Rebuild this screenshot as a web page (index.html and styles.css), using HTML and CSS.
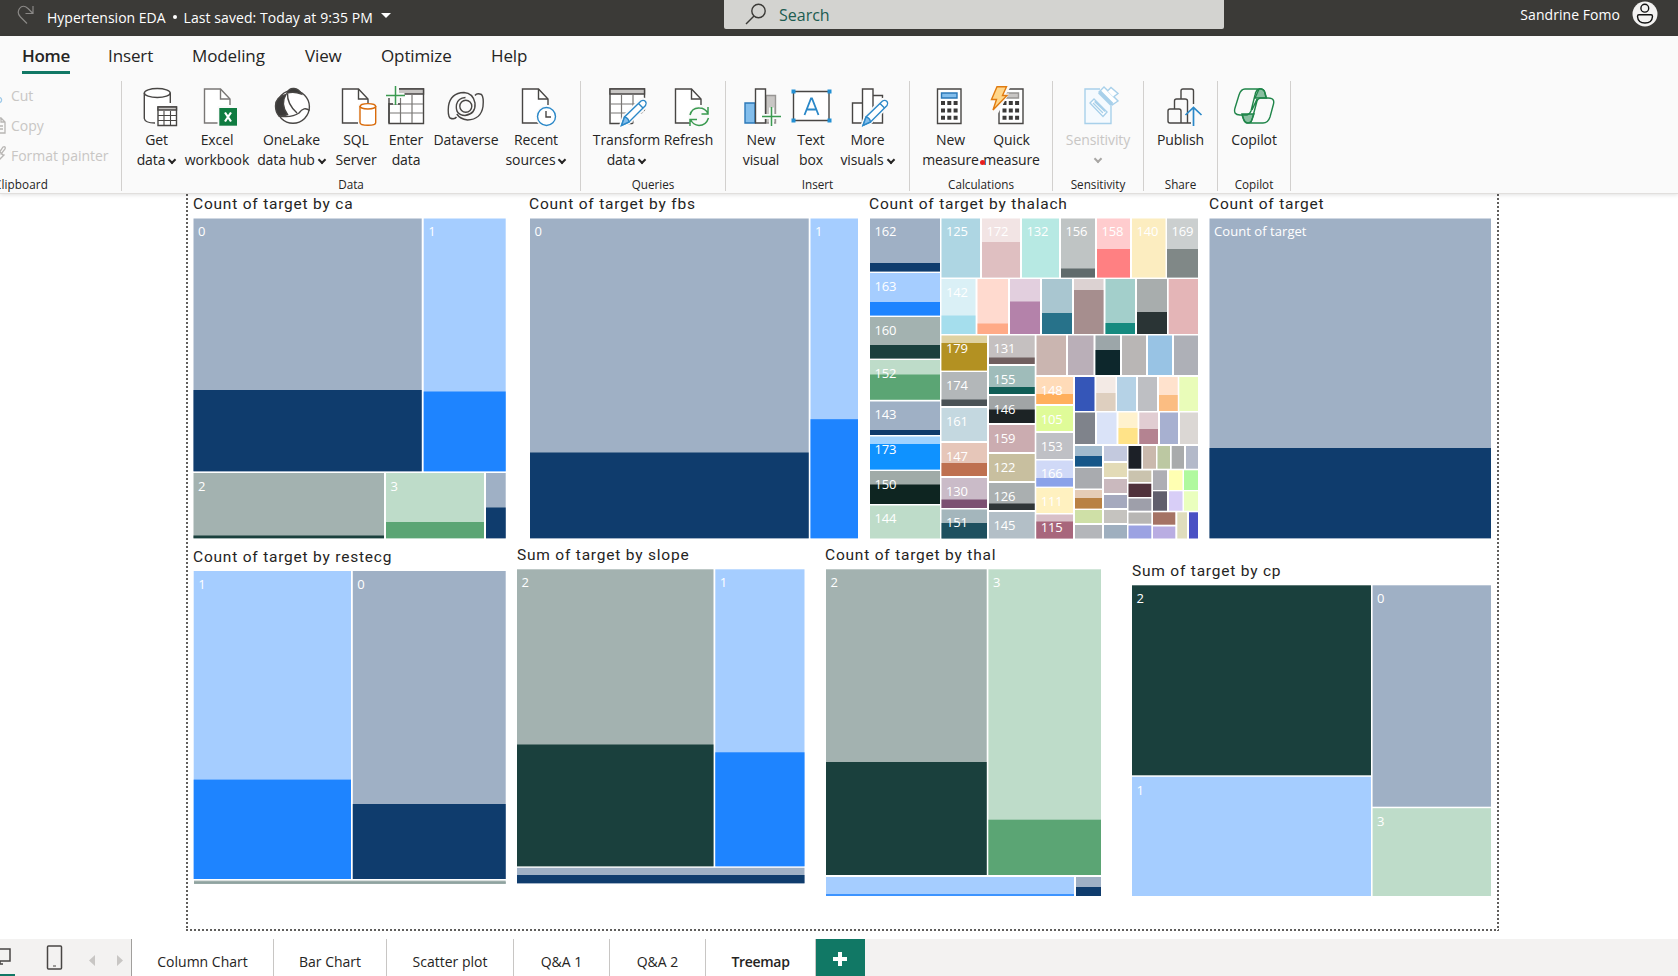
FILE: index.html
```html
<!DOCTYPE html>
<html lang="en">
<head>
<meta charset="utf-8">
<title>Hypertension EDA</title>
<link rel="stylesheet" href="styles.css">
</head>
<body>
<svg class="defs" width="0" height="0">
  <defs>
    <g id="page"><path d="M7.5 3H23.5L33 12.500V36.500H7.500Z" fill="#fff" stroke="none"/><path d="M33 19V13L23.500 3H7.500V37H26" fill="none"/><path d="M23.500 3V13H33" fill="none"/></g>
    <g id="pencil"><path d="M14 40L17 31L34 14Q37 12.500 39 15Q41 17.500 39 20L22 36Z" fill="#fafafa" stroke="#fafafa" stroke-width="4"/><path d="M14.500 39.500L17.500 31L34 15Q36.500 13.500 38.500 15.500Q40 17.500 38.500 19.500L22 36Z" fill="#fff" stroke="#2b88c8"/><path d="M14.500 39.500L17.500 31Q21.500 32 22 36Z" fill="#83beec" stroke="#2b88c8"/><path d="M31.500 17.500L36 22" stroke="#2b88c8"/></g>
    <g id="plus"><path d="M-9 0H9M0 -9V9" stroke="#fafafa" stroke-width="5"/><path d="M-9.500 0H9.500M0 -9.500V9.500" stroke="#3a9a50" stroke-width="1.500"/></g>
    <g id="keys" fill="#3b3a39" stroke="none"><path d="M11 15h4v4h-4zm6.300 0h4v4h-4zm6.300 0h4v4h-4zM11 22.400h4v4h-4zm6.300 0h4v4h-4zm6.300 0h4v4h-4zM11 29.800h4v4h-4zm6.300 0h4v4h-4zm6.300 0h4v4h-4z"/></g>
  </defs>
</svg>
<header class="titlebar">
  <svg class="redo" width="18" height="20" viewBox="0 0 18 20"><path d="M16 1V8.500H8.500M16 8.500L11 3.500Q6 -1 2.500 3.500Q-.5 8 3.500 12L10 18.500" /></svg>
  <span class="doc">Hypertension EDA</span><span class="bullet"></span><span class="doc saved">Last saved: Today at 9:35 PM</span>
  <span class="caret"></span>
  <div class="search">
    <svg width="22" height="22" viewBox="0 0 22 22"><circle cx="13.500" cy="8" r="6.700"/><path d="M9 13L1 21"/></svg>
    <span>Search</span>
  </div>
  <span class="user">Sandrine Fomo</span>
  <svg class="avatar" width="26" height="26" viewBox="0 0 26 26"><circle cx="13" cy="13" r="12.500" fill="#f3f2f1" stroke="none"/><circle cx="12.800" cy="7.200" r="3.900"/><path d="M7 13.800H19Q20.500 13.800 20.500 15.500Q20 22 13 22T5.500 15.500Q5.500 13.800 7 13.800Z"/></svg>
</header>
<section class="ribbon">
  <nav class="menu">
    <a class="active">Home</a><a class="insert">Insert</a><a class="modeling">Modeling</a><a class="view">View</a><a class="optimize">Optimize</a><a class="help">Help</a>
  </nav>
  <div class="groups">
    <div class="group clipboard">
      <ul>
        <li><svg width="10" height="20" viewBox="0 0 10 20"><circle cx="-1" cy="15" r="2.600" stroke="#9cc8e8"/></svg>Cut</li>
        <li><svg width="10" height="20" viewBox="0 0 10 20"><path d="M-2 3H1L5 7V18H-3M1 3V7H5M-1 11H3M-1 14H3"/></svg>Copy</li>
        <li><svg width="10" height="20" viewBox="0 0 10 20"><path d="M-1 8L3 2Q6 1 5 4L1 9L4 10L-2 16M-1 6L3 10"/></svg>Format painter</li>
      </ul>
      <div class="caption">Clipboard</div>
    </div>
    <div class="group data">
      <div class="tools">
        <div class="tool"><svg viewBox="0 0 40 40"><path d="M7.300 7V32Q7.300 37 20 37V20H33.500V7" fill="#fff" stroke="none"/><ellipse cx="20.300" cy="7" rx="13" ry="4.500" fill="#fff"/><path d="M7.300 7V32.500Q8 37 18 37M33.300 7V17"/><path d="M21 21H39.500V39.500H21Z" fill="#fff"/><path d="M21 21H39.500V24H21Z" fill="#c8c6c4"/><path d="M21 29.500H39.500M21 34.500H39.500M27 25V39.500M33.500 25V39.500" stroke-width="1.100"/></svg><span>Get<br>data<i class="chev"></i></span></div>
        <div class="tool"><svg viewBox="0 0 40 40"><g stroke="#797775"><use href="#page"/></g><path d="M20.500 20H40V40H20.500Z" fill="#fafafa" stroke="none"/><path d="M22.300 22H40V39.700H22.300Z" fill="#107c41" stroke="none"/><path d="M28 26.500L34 35.500M34 26.500L28 35.500" stroke="#fff" stroke-width="2.200"/></svg><span>Excel<br>workbook</span></div>
        <div class="tool"><svg viewBox="0 0 40 40"><circle cx="21" cy="20.800" r="16.400" fill="#fff"/><path d="M14 8.500Q3.500 11 3.500 20Q3.500 26 7 30Q12 30 15.500 28.500Q8 18 14 8.500Z" fill="#3b3a39"/><path d="M15 7Q17 2 22 2.500Q27 3 29.500 8Q22 5 15 7Z" fill="#3b3a39"/><path d="M15.500 7.500Q15 18 25 27M7 30Q20 32 27 27Q32 20 37.500 24.500" fill="none"/></svg><span>OneLake<br>data hub<i class="chev"></i></span></div>
        <div class="tool"><svg viewBox="0 0 40 40"><use href="#page" x="-1"/><path d="M22 18H40V40H22Z" fill="#fafafa" stroke="none"/><path d="M24 20V36.500Q24 39.300 32 39.300T39.700 36.500V20" fill="#fff" stroke="#d96b0b"/><ellipse cx="31.900" cy="20.300" rx="7.800" ry="2.700" fill="#fff" stroke="#d96b0b"/></svg><span>SQL<br>Server</span></div>
        <div class="tool"><svg viewBox="0 0 40 40"><path d="M3 3H37.500V37.500H3Z" fill="#fff"/><path d="M3 3H37.500V8H3Z" fill="#c8c6c4"/><path d="M3 18H37M3 27H37M14.500 8V37M26 8V37" stroke-width="1.200" stroke="#797775"/><path d="M-1 0H13V17H-1Z" fill="#fafafa" stroke="none"/><path d="M3 12V37M3 18H14.500" /><use href="#plus" x="9.500" y="9.500"/></svg><span>Enter<br>data</span></div>
        <div class="tool"><svg viewBox="0 0 40 40"><circle cx="19.800" cy="20.300" r="6"/><path d="M10.500 31Q8.500 34 4 32Q1.500 29 2.500 20Q4.500 7 18 6.500Q27 7 29 17Q30 28 19 29.500Q9 29 10.500 18.500Q12 12 19.500 11.500"/><path d="M29 9.500Q31 6.500 35.500 8.500Q38 11.500 37 20.500Q35 33.500 21.500 34Q14 33 10.800 28"/></svg><span>Dataverse</span></div>
        <div class="tool"><svg viewBox="0 0 40 40"><use href="#page" x="-1"/><circle cx="30.500" cy="30.500" r="11" fill="#fafafa" stroke="none"/><circle cx="30.500" cy="30.500" r="9" fill="#fff" stroke="#2b88c8"/><path d="M30 25V31H35"/></svg><span>Recent<br>sources<i class="chev"></i></span></div>
      </div>
      <div class="caption">Data</div>
    </div>
    <div class="group queries">
      <div class="tools">
        <div class="tool"><svg viewBox="0 0 40 40"><path d="M3 3H37.500V37.500H3Z" fill="#fff"/><path d="M3 3H37.500V8H3Z" fill="#c8c6c4"/><path d="M3 18H37M3 27H37M14.500 8V37M26 8V37" stroke-width="1.200" stroke="#797775"/><path d="M24 40L40 22V40Z" fill="#fafafa" stroke="none"/><use href="#pencil"/></svg><span>Transform<br>data<i class="chev"></i></span></div>
        <div class="tool"><svg viewBox="0 0 40 40"><use href="#page" x="-1"/><circle cx="30" cy="31" r="11" fill="#fafafa" stroke="none"/><g fill="none" stroke="#3a9a50" stroke-width="1.500"><path d="M21 29Q23 21.500 30.500 22Q36 22 39 27.500M39 21V28H32.500M39.500 32Q37 39.500 30 39.500Q24 39 21.500 33.500M21 40V33.500H28"/></g></svg><span>Refresh</span></div>
      </div>
      <div class="caption">Queries</div>
    </div>
    <div class="group visuals">
      <div class="tools">
        <div class="tool"><svg viewBox="0 0 40 40"><path d="M25 9.500H34.500V37H25Z" fill="#c8c6c4" stroke="#979593"/><path d="M4 17H14V37H4Z" fill="#83beec" stroke="#2b78b8"/><path d="M14.500 3H24.500V37H14.500Z" fill="#fff"/><use href="#plus" x="30.500" y="30.500"/></svg><span>New<br>visual</span></div>
        <div class="tool"><svg viewBox="0 0 40 40"><path d="M2.500 5.500H38V34.500H2.500Z" fill="#fff"/><path d="M13.500 29L20 12.500H21L27.500 29M15.700 23.500H25.300" stroke="#2b88c8" stroke-width="1.800"/><path d="M.5 3.500h4v4h-4zm36 0h4v4h-4zm0 29h4v4h-4zm-36 0h4v4h-4z" fill="#2390d4" stroke="none"/></svg><span>Text<br>box</span></div>
        <div class="tool"><svg viewBox="0 0 40 40"><path d="M25 9.500H34.500V37H25ZM4.500 17H14.500V37H4.500ZM14.500 3H25V37H14.500Z" fill="#fff"/><use href="#pencil" x=".5"/></svg><span>More<br>visuals<i class="chev"></i></span></div>
      </div>
      <div class="caption">Insert</div>
    </div>
    <div class="group calc">
      <div class="tools">
        <div class="tool"><svg viewBox="0 0 40 40"><g transform="translate(-1)"><path d="M7.500 3H31V37.500H7.500Z" fill="#fff"/><path d="M11.500 7H27V12H11.500Z" fill="#83beec" stroke="#2b78b8"/><use href="#keys"/></g></svg><span>New<br>measure</span></div>
        <div class="tool"><svg viewBox="0 0 40 40"><g transform="translate(-.5)"><path d="M7.500 3H31.500V37.500H7.500Z" fill="#fff"/><path d="M15 7H27V12H14Z" fill="#c8c6c4" stroke="#979593"/><use href="#keys"/><path d="M3 0H18L12 9H15L5 27L-2 26Z" fill="#fafafa" stroke="#fafafa" stroke-width="3"/><path d="M5.500 .8H15L11 9.500H15.500L1.500 24L5 13.500H0Z" fill="#ffd68a" stroke="#e07b10"/></g></svg><span>Quick<br>measure</span><b class="dot"></b></div>
      </div>
      <div class="caption">Calculations</div>
    </div>
    <div class="group sens">
      <div class="tools">
        <div class="tool off"><svg viewBox="0 0 40 40" class="pale"><path d="M22 3H7V37.500H33V20" fill="#f5fafe"/><path d="M12 17L16 13L29 26L25 30.500ZM15 17L25 27M16.500 15.500L27 25.500" fill="#fff"/><path d="M21 6L26 1L40 15L34 19Z" fill="#fff" stroke="#a8d0ea"/><path d="M21.500 6L34 18.500" stroke-width="4"/><path d="M29.500 5L33 1.500L40 7.500L35.500 11" fill="#fff"/></svg><span>Sensitivity<br><i class="chev lone"></i></span></div>
      </div>
      <div class="caption">Sensitivity</div>
    </div>
    <div class="group share">
      <div class="tools">
        <div class="tool"><svg viewBox="0 0 40 40"><path d="M7 25Q7 23 9 23H18Q20 23 20 25V37H9Q7 37 7 35ZM13.500 23V15Q13.500 13 15.500 13H24Q26.500 13 26.500 15V37H20M20 13V5Q20 3 22 3H30.500Q32.500 3 32.500 5V18M26 37H30"/><path d="M32.500 40V21.500M24.500 29L32.500 21.500L40.500 29" stroke="#2b88c8" stroke-width="1.700"/></svg><span>Publish</span></div>
      </div>
      <div class="caption">Share</div>
    </div>
    <div class="group copilot">
      <div class="tools">
        <div class="tool"><svg viewBox="0 0 40 40" class="green"><path d="M21 12L25 3Q30 2 31 7L32.500 12ZM8 28L20 28L17 36Q11 39 9.500 33Z" fill="#88bfa0"/><path d="M25 3H11Q7 3 5 9L1 22Q-1 29 6 29H13Q16 28 17 25L21 9Q22 4 25 3ZM25 2.800Q30 2.500 31 7L32 12M15 37H29Q34 37 36 31L39.500 18Q41 12 34 12H26Q23.500 13 23 15L19 30Q18 36 15 37ZM15 37Q11 37 9.500 33L8 29M18 24L23 13" fill="none"/></svg><span>Copilot</span></div>
      </div>
      <div class="caption">Copilot</div>
    </div>
  </div>
</section>
<main class="workspace">
  <div class="report" id="report"></div>
</main>
<footer class="pages">
  <div class="modes">
    <svg width="131" height="37" viewBox="0 0 131 37"><path d="M-4 10H10V22H-4M0 22V25H3M-2 25H3" fill="none" stroke="#484644" stroke-width="1.500"/><path d="M0 35H15V37H0Z" fill="#117865"/><rect x="47.500" y="7" width="14" height="23" rx="1" fill="#f3f2f1" stroke="#484644" stroke-width="1.500"/><path d="M53 27H56" stroke="#484644"/><path d="M95 16V27L89 21.500ZM117 16V27L123 21.500Z" fill="#c8c6c4"/></svg>
  </div>
  <a class="t1">Column Chart</a><a class="t2">Bar Chart</a><a class="t3">Scatter plot</a><a class="t4">Q&amp;A 1</a><a class="t5">Q&amp;A 2</a><a class="t6 current">Treemap</a>
  <button class="add"><svg width="14" height="14" viewBox="0 0 14 14"><path d="M7 0V14M0 7H14"/></svg></button>
</footer>
<script src="treemaps.js"></script>
</body>
</html>
```

FILE: styles.css
```css
* { box-sizing: border-box; }
body {
  margin: 0; width: 1678px; height: 976px; overflow: hidden;
  display: flex; flex-direction: column; background: #fff;
  font-family: "Open Sans", "Noto Sans", sans-serif; font-size: 14px; color: #252423;
}
svg { display: block; flex: none; }
.defs { position: absolute; }

.titlebar { position: relative; height: 36px; flex: none; background: #3b3a37; color: #fff; display: flex; line-height: 35px; padding-left: 17px; }
.redo { margin-top: 5px; fill: none; stroke: #8a8886; stroke-width: 1.2; }
.doc { margin-left: 12px; white-space: nowrap; }
.doc.saved { margin-left: 7px; letter-spacing: .07px; }
.bullet { width: 4px; height: 4px; border-radius: 2px; background: #fff; margin: 15px 0 0 7px; }
.caret { border: 5px solid transparent; border-top-color: #fff; height: 5px; margin: 13px 0 0 8px; }
.search { position: absolute; left: 724px; top: 0; width: 500px; height: 29px; background: #d3d3d0; border-radius: 0 0 2px 2px; display: flex; padding: 3px 0 0 21px; color: #1c5c50; font-size: 16px; line-height: 24px; }
.search svg { fill: none; stroke: #3b3a37; stroke-width: 1.4; margin-right: 12px; }
.user { margin-left: auto; line-height: 30px; letter-spacing: .05px; }
.avatar { margin: 1px 20px 0 12px; fill: none; stroke: #111; stroke-width: 1.4; }

.ribbon { position: relative; z-index: 2; flex: none; height: 158px; background: #fafafa; border-bottom: 1px solid #e1dfdd; box-shadow: 0 1px 4px rgba(0,0,0,.12); }
.menu { display: flex; height: 45px; padding-left: 22px; font-size: 17px; letter-spacing: -.12px; line-height: 39px; }
.menu a { height: 38px; white-space: nowrap; }
.menu .active { width: 48px; font-weight: 600; letter-spacing: -.3px; border-bottom: 3px solid #117865; }
.menu .insert { margin-left: 38px; width: 84px; }
.menu .modeling { width: 113px; }
.menu .view { width: 76px; }
.menu .optimize { width: 110px; }
.groups { display: flex; height: 110px; }
.group { border-right: 1px solid #d2d0ce; display: flex; flex-direction: column; justify-content: space-between; height: 110px; }
.caption { text-align: center; font-size: 11.7px; line-height: 16px; height: 15px; }
.clipboard { width: 122px; }
.clipboard ul { list-style: none; margin: -1px 0 0; padding: 0; color: #c8c6c4; }
.clipboard li { display: flex; align-items: center; height: 30px; gap: 1px; white-space: nowrap; letter-spacing: -.02px; }
.clipboard li svg { fill: none; stroke: #b8b6b4; stroke-width: 1.3; }
.clipboard .caption { text-align: left; margin-left: -6px; letter-spacing: .1px; }
.data { width: 459px; } .queries { width: 145px; } .visuals { width: 184px; } .calc { width: 143px; }
.sens { width: 91px; } .share { width: 74px; } .copilot { width: 73px; }
.tools { display: grid; padding-top: 5px; }
.data .tools { grid-template-columns: 53px 68px 81px 48px 52px 68px 72px; padding-left: 8px; }
.queries .tools { grid-template-columns: 67px 57px; padding-left: 12px; }
.visuals .tools { grid-template-columns: 46px 54px 59px; padding-left: 12px; }
.calc .tools { grid-template-columns: 61px 61px; padding-left: 10px; }
.tool { position: relative; display: flex; flex-direction: column; align-items: center; }
.tool svg { width: 40px; height: 40px; overflow: visible; fill: none; stroke: #484644; stroke-width: 1.4; }
.tool span { margin-top: 4px; line-height: 20px; letter-spacing: -.1px; text-align: center; white-space: nowrap; }
.tool svg.pale { stroke: #a8d0ea; }
.tool svg.green { stroke: #1f8549; }
.off { color: #c8c6c4; }
.chev { display: inline-block; width: 6px; height: 6px; border: solid currentColor; border-width: 0 2px 2px 0; transform: rotate(45deg); margin: 0 1px 2px 4px; }
.chev.lone { margin: 0 0 3px; border-color: #a8a6a4; }
.dot { position: absolute; left: -1px; top: 74px; width: 5px; height: 5px; border-radius: 50%; background: #e81e1e; }

.workspace { flex: 1; position: relative; overflow: hidden; }
.report { position: absolute; left: 0; top: -194px; width: 1678px; height: 976px; }
.report::before {
  content: ""; position: absolute; left: 186px; top: 194px; width: 1313px; height: 737px;
  background:
    repeating-linear-gradient(180deg, #605e5c 0 2px, transparent 2px 4px) left / 2px 100% no-repeat,
    repeating-linear-gradient(180deg, #605e5c 0 2px, transparent 2px 4px) right / 2px 100% no-repeat,
    repeating-linear-gradient(90deg, #605e5c 0 2px, transparent 2px 4px) bottom / 100% 2px no-repeat;
}
.visual { position: absolute; margin: 0; }
.visual figcaption { font: 15.5px/16px Roboto, sans-serif; letter-spacing: .79px; height: 22px; white-space: nowrap; }
.visual text { font-size: 13px; fill: #fff; }

.pages { height: 37px; flex: none; display: flex; background: #f3f2f1; }
.modes { width: 132px; border-right: 1px solid #a19f9d; }
.pages a { background: #fff; border-right: 1px solid #c8c6c4; text-align: center; line-height: 45px; height: 37px; }
.t1 { width: 142px; } .t2 { width: 113px; } .t3 { width: 127px; } .t4, .t5 { width: 96px; } .t6 { width: 110px; }
.pages .current { font-weight: 600; letter-spacing: -.3px; }
.add { width: 49px; border: 0; padding: 3px 1px 0 0; background: #117865; display: flex; justify-content: center; align-items: center; }
.add path { stroke: #fff; stroke-width: 4; }
```

FILE: treemaps.js
```js
// Cell: [left, top, right, bottom, fill, label, highlight fill, highlight top]
const N = '#9fb0c5', ND = '#0f3c6d', B = '#a5cdff', BD = '#1e84ff';
const T = '#a3b2b0', TD = '#1a403d', G = '#bedcc9', GD = '#5ba574';

const visuals = [
  { title: 'Count of target by ca', box: [193, 218, 313, 321], cells: [
    [193.5, 218.5, 421.7, 471.3, N, '0', ND, 390], [423.7, 218.5, 505.7, 471.3, B, '1', BD, 391.5],
    [193.5, 473, 384, 538.3, T, '2', TD, 535.5], [386, 473, 484, 538.3, G, '3', GD, 522],
    [486, 473, 505.7, 538.3, N, '', ND, 507.5]] },
  { title: 'Count of target by fbs', box: [529, 218, 330, 321], cells: [
    [530, 218.5, 808.7, 538.3, N, '0', ND, 452.5], [810.5, 218.5, 858, 538.3, B, '1', BD, 419.2]] },
  { title: 'Count of target by thalach', box: [869, 218, 330, 321], cells: [
    [870, 218.5, 940, 271.5, N, '162', ND, 263], [870, 273, 940, 315.5, B, '163', BD, 302],
    [870, 317, 940, 358.5, T, '160', TD, 345], [870, 360, 940, 399.7, G, '152', GD, 374.5],
    [870, 401.5, 940, 435, N, '143', ND, 430], [870, 436.5, 940, 469.5, '#a0d3ff', '173', '#0f92ff', 444],
    [870, 471, 940, 504, '#a0aba8', '150', '#0e2521', 484.5], [870, 505.5, 940, 538.5, G, '144'],
    [941.5, 218.5, 980, 277.5, '#aed6e3', '125'], [982, 218.5, 1020, 277.5, '#f2e4e4', '172', '#dfbfc1', 242],
    [1022, 218.5, 1059, 277.5, '#b7e9e3', '132'], [1061, 218.5, 1095, 277.5, '#bfc4c4', '156', '#606b6c', 268.5],
    [1097, 218.5, 1130, 277.5, '#ffccce', '158', '#ff8082', 249], [1132, 218.5, 1165.5, 277.5, '#fcedc0', '140'],
    [1167, 218.5, 1198, 277.5, '#cbcfcf', '169', '#808887', 249],
    [941.5, 279, 975.5, 334, '#daf0f6', '142', '#a5deed', 315.5], [977.5, 279, 1008, 334, '#ffdacf', '', '#ffaa87', 323.5],
    [1010, 279, 1040, 334, '#e2cfde', '', '#b482aa', 301.5], [1042, 279, 1072, 334, '#a9c6d0', '', '#27728a', 313],
    [1074, 279, 1103.5, 334, '#dcd2d2', '', '#a68e8e', 290], [1105.5, 279, 1135, 334, '#a3cfcb', '', '#168a7f', 323],
    [1137, 279, 1167, 334, '#a8adad', '', '#2a3435', 312], [1168.7, 279, 1198, 334, '#e4b5b7'],
    [941.5, 335.5, 987, 370.5, '#dfd2a2', '179', '#b39122', 343], [941.5, 372, 987, 406, '#b3b7b9', '174', '#4a5256', 399.5],
    [941.5, 408, 987, 441, '#c4d8e0', '161'], [941.5, 443, 987, 476, '#e6c6b9', '147', '#be7050', 463],
    [941.5, 478, 987, 508, '#cabbc8', '130', '#7c5072', 499.5], [941.5, 509.5, 987, 538.5, '#a4b6bc', '151', '#1e505f', 523],
    [989, 335.5, 1034.7, 364, '#c5c0c0', '131', '#705f5f', 357.5], [989, 366, 1034.7, 394, '#9fbcba', '155', '#105e57', 387],
    [989, 396, 1034.7, 423, '#a1a5a6', '146', '#1c2325', 409.5], [989, 425, 1034.7, 452, '#cbacb0', '159'],
    [989, 454, 1034.7, 481, '#c8bf9f', '122'], [989, 483, 1034.7, 510, '#aaafb0', '126', '#303638', 503.5],
    [989, 512, 1034.7, 538.5, '#b3bfc7', '145'],
    [1036.5, 335.5, 1066, 375, '#cab5b0'], [1068, 335.5, 1093.5, 375, '#baafb8'],
    [1095.5, 335.5, 1120, 375, '#9ca6a9', '', '#0d272c', 350], [1122, 335.5, 1146, 375, '#b9b6b5'],
    [1148, 335.5, 1172, 375, '#98c3e4'], [1174, 335.5, 1198, 375, '#aeb0b7'],
    [1036.3, 377, 1073, 404, '#ffdbb8', '148', '#ffaf5c', 394], [1036.3, 406, 1073, 431, '#dffb98', '105'],
    [1036.3, 433, 1073, 459, '#bfc0c5', '153'], [1036.3, 460.5, 1073, 486.5, '#d0d9f7', '166', '#8ba2e9', 478],
    [1036.3, 488, 1073, 513, '#fff1c0', '111'], [1036.3, 514.5, 1073, 538.5, '#d8c0c8', '115', '#a8667c', 521.5],
    [1075, 377, 1094.5, 411, '#3556b8'], [1096.3, 377, 1115.5, 411, '#f3eae5', '', '#decfbf', 393],
    [1117, 377, 1136, 411, '#b5d2e6'], [1138, 377, 1157, 411, '#bebfc3'],
    [1159, 377, 1177.7, 411, '#ffe2cd', '', '#fbbd82', 395], [1179.3, 377, 1198, 411, '#e9fcb9'],
    [1075, 412.5, 1095, 444, '#7f838b'], [1097, 412.5, 1116.5, 444, '#dae3f8'],
    [1118.5, 412.5, 1137.5, 444, '#fff2ce', '', '#ffe388', 428], [1139.3, 412.5, 1158, 444, '#e1cdd2', '', '#b48391', 429],
    [1160, 412.5, 1178, 444, '#a7b0d0'], [1180, 412.5, 1198, 444, '#dbd7d4'],
    [1075, 446, 1102, 466.5, '#a1bacd', '', '#165688', 456], [1075, 468, 1102, 488.5, '#a9abaf'],
    [1075, 490, 1102, 508.5, '#e5ccb7', '', '#b98144', 498], [1075, 510, 1102, 523, '#cfe0a7'],
    [1075, 525, 1102, 538.5, '#b4b6ba'],
    [1104, 446, 1127, 461, '#c3c9de'], [1104, 463, 1127, 477, '#e3dbb7'], [1104, 479, 1127, 493, '#cab9be'],
    [1104, 495, 1127, 508, '#a5a9be'], [1104, 510, 1127, 523, '#c5c3bf'], [1104, 525, 1127, 538.5, '#9fafbf'],
    [1128.5, 446, 1141.3, 468.7, '#1c2027'], [1143, 446, 1156, 468.7, '#cab9ad'], [1157.5, 446, 1170, 468.7, '#bcc8a2'],
    [1171.7, 446, 1184, 468.7, '#a9abac'], [1186, 446, 1198, 468.7, '#b3b9c9'],
    [1128.5, 470.5, 1151.3, 482, '#cac3ae'], [1128.5, 483.7, 1151.3, 497, '#50323c'], [1128.5, 498.5, 1151.3, 510.7, '#9e9faa'],
    [1128.5, 512.5, 1151.3, 523.7, '#b8b6b4'], [1128.5, 525.5, 1151.3, 538.5, '#9ba2e2'],
    [1153, 470.3, 1167, 490, '#aeaeb4'], [1153, 491.3, 1167, 510.7, '#615f6d'],
    [1169, 470.3, 1182.5, 490, '#ffffb2'], [1169, 491.3, 1182.5, 510.7, '#d8cef7'],
    [1184, 470.3, 1198, 490, '#b0f99e'], [1184, 491.3, 1198, 510.7, '#eaffbe'],
    [1153, 512.3, 1175.3, 524.7, '#a57365'], [1153, 526.5, 1175.3, 538.5, '#b9ade2'],
    [1177.3, 512.3, 1187, 538.5, '#dfddbd'], [1189, 512.3, 1198, 538.5, '#4a51c4']] },
  { title: 'Count of target', box: [1209, 218, 283, 321], cells: [
    [1209.5, 218.5, 1491, 538.3, N, 'Count of target', ND, 448]] },
  { title: 'Count of target by restecg', box: [193, 571, 313, 314], cells: [
    [193.7, 571, 351, 879, B, '1', BD, 779.6], [352.8, 571, 505.7, 879, N, '0', ND, 804],
    [194, 880.6, 505.7, 883.8, T, '', '#8fa3a0', 881.8]] },
  { title: 'Sum of target by slope', box: [517, 569, 288, 315], cells: [
    [517, 569.3, 713.5, 866.3, T, '2', TD, 744.5], [715.3, 569.3, 804.5, 866.3, B, '1', BD, 752.3],
    [517, 867.8, 804.5, 883.3, N, '', ND, 875]] },
  { title: 'Count of target by thal', box: [825, 569, 277, 328], cells: [
    [826, 569.3, 986.7, 875, T, '2', TD, 762], [988.4, 569.3, 1101, 875, G, '3', GD, 819.7],
    [826, 877, 1074, 896, B, '', '#3d94ff', 894], [1076, 877, 1101, 896, N, '', ND, 887]] },
  { title: 'Sum of target by cp', box: [1132, 585, 360, 312], cells: [
    [1132, 585.3, 1371, 775.3, TD, '2'], [1132, 776.8, 1371, 896, B, '1'],
    [1372.6, 585.3, 1491, 806.7, N, '0'], [1372.6, 808.2, 1491, 896, G, '3']] },
];

const report = document.getElementById('report');
for (const { title, box: [x, y, w, h], cells } of visuals) {
  let shapes = '';
  for (const [l, t, r, b, fill, label, hot, split] of cells) {
    shapes += `<rect x="${l}" y="${t}" width="${r - l}" height="${b - t}" fill="${fill}"/>`;
    if (hot) shapes += `<rect x="${l}" y="${split}" width="${r - l}" height="${b - split}" fill="${hot}"/>`;
    if (label) {
      const len = label.length > 3 ? 92.5 : label.length * 7.3;
      shapes += `<text x="${l + 4.5}" y="${t + 17.7}" textLength="${len}">${label}</text>`;
    }
  }
  const figure = document.createElement('figure');
  figure.className = 'visual';
  figure.style.left = x + 'px';
  figure.style.top = y - 22 + 'px';
  figure.innerHTML = `<figcaption>${title}</figcaption><svg width="${w}" height="${h}" viewBox="${x} ${y} ${w} ${h}">${shapes}</svg>`;
  report.append(figure);
}
```
